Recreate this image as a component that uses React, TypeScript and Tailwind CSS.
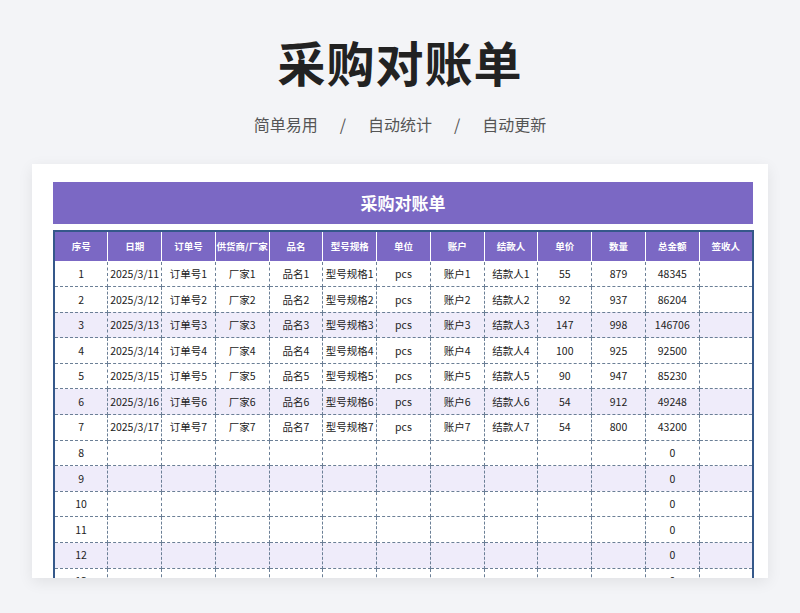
const headers = ['序号', '日期', '订单号', '供货商/厂家', '品名', '型号规格', '单位', '账户', '结款人', '单价', '数量', '总金额', '签收人']

const data = [
  [55, 879],
  [92, 937],
  [147, 998],
  [100, 925],
  [90, 947],
  [54, 912],
  [54, 800],
]

const rows: string[][] = []
for (let i = 1; i <= 13; i++) {
  const d = data[i - 1]
  if (d) {
    rows.push([
      String(i),
      `2025/3/${10 + i}`,
      `订单号${i}`,
      `厂家${i}`,
      `品名${i}`,
      `型号规格${i}`,
      'pcs',
      `账户${i}`,
      `结款人${i}`,
      String(d[0]),
      String(d[1]),
      String(d[0] * d[1]),
      '',
    ])
  } else {
    rows.push([String(i), '', '', '', '', '', '', '', '', '', '', '0', ''])
  }
}

export default function App() {
  return (
    <div
      className="w-[800px] h-[613px] overflow-hidden bg-[#f3f4f7] flex flex-col items-center"
      style={{ fontFamily: '"Noto Sans CJK SC", "Noto Sans", sans-serif' }}
    >
      <h1 className="mt-[26px] h-[70px] leading-[70px] text-[48px] font-bold text-[#222] tracking-[1px]">采购对账单</h1>
      <div className="mt-[16px] flex items-center gap-[22px] text-[16px] text-[#555]">
        <span>简单易用</span>
        <span>/</span>
        <span>自动统计</span>
        <span>/</span>
        <span>自动更新</span>
      </div>
      <div className="mt-[28px] w-[736px] h-[414px] bg-white shadow-[0_4px_14px_rgba(0,0,0,0.08)] overflow-hidden pt-[18px] pl-[21px]">
        <div className="w-[700px] h-[42px] bg-[#7b68c4] flex items-center justify-center text-white text-[17px] font-bold">采购对账单</div>
        <table className="mt-[6px] w-[701px] border-collapse border-2 border-[#35588a] table-fixed">
          <thead>
            <tr className="h-[30px] bg-[#7b68c4]">
              {headers.map((h) => (
                <th key={h} className="border border-white border-t-0 text-white text-[9.5px] font-bold whitespace-nowrap p-0 first:border-l-0 last:border-r-0">{h}</th>
              ))}
            </tr>
          </thead>
          <tbody>
            {rows.map((r, i) => (
              <tr key={i} className={`h-[25.6px] ${i % 3 === 2 ? 'bg-[#efecfa]' : 'bg-white'}`}>
                {r.map((c, j) => (
                  <td key={j} className="border border-dashed border-[#6b7f96] text-center text-[10.5px] text-[#222] p-0 whitespace-nowrap">{c}</td>
                ))}
              </tr>
            ))}
          </tbody>
        </table>
      </div>
    </div>
  )
}
